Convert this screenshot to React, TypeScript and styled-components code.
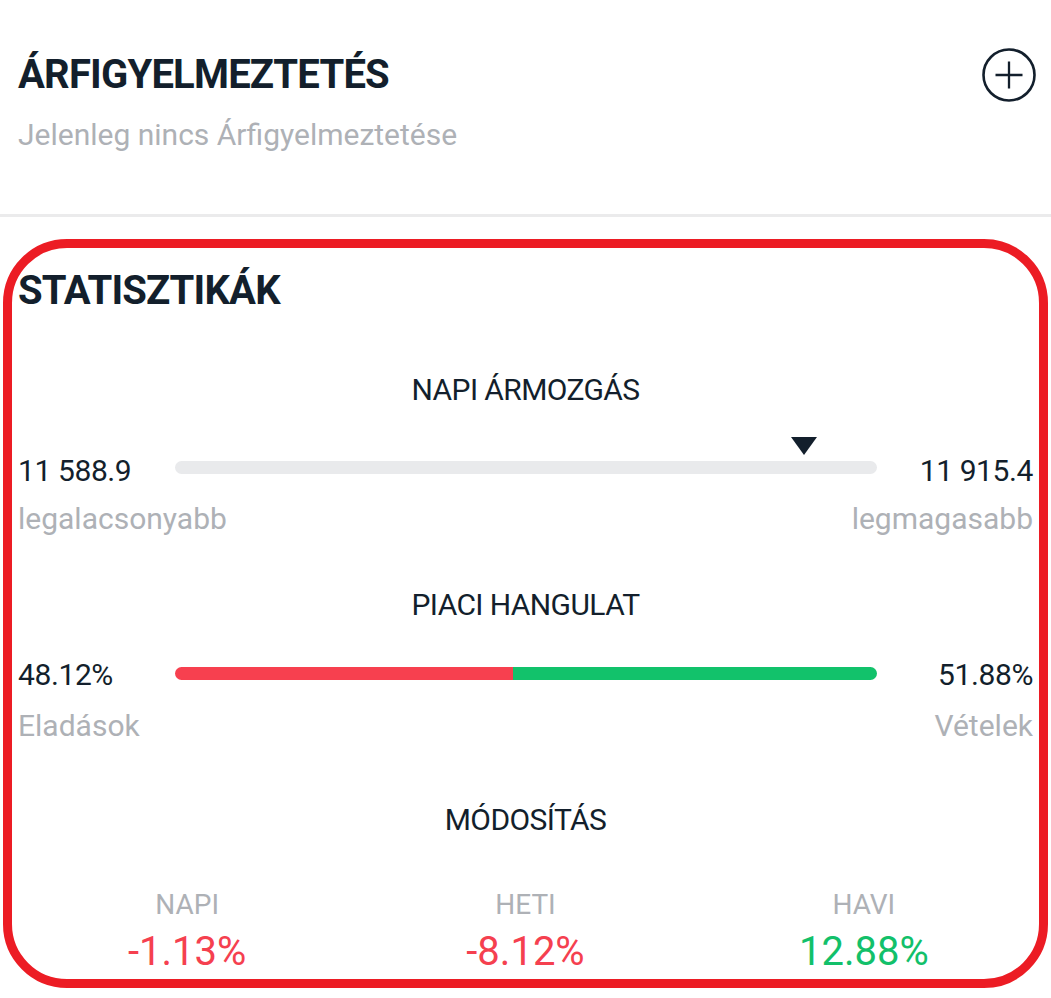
import React from "react";
import styled, { createGlobalStyle } from "styled-components";

const GlobalStyle = createGlobalStyle`
  html, body { margin: 0; padding: 0; background: #ffffff; }
  body { font-family: Roboto, "Liberation Sans", sans-serif; color: #131f2c; }
  * { box-sizing: border-box; }
`;

const Page = styled.div`
  width: 1051px;
  display: flex;
  flex-direction: column;
`;

const AlertHeader = styled.header`
  padding: 47px 18px 61px 18px;
  display: flex;
  flex-direction: column;
`;

const TitleRow = styled.div`
  display: flex;
  align-items: center;
  justify-content: space-between;
`;

const SectionTitle = styled.h2`
  margin: 0;
  font-family: Roboto, sans-serif;
  font-weight: 700;
  font-size: 40px;
  line-height: 48px;
  letter-spacing: -0.8px;
  color: #131f2c;
`;

const Muted = styled.p`
  margin: 14px 0 0 0;
  font-size: 30px;
  line-height: 36px;
  color: #aeb1b6;
`;

const AddButton = styled.button`
  border: none;
  background: none;
  padding: 0;
  width: 56px;
  height: 56px;
  display: flex;
  align-items: center;
  justify-content: center;
  cursor: pointer;
  margin-right: -4px;
`;

const Divider = styled.hr`
  margin: 0;
  border: none;
  height: 3px;
  background: #ebebec;
`;

const StatsCard = styled.section`
  margin: 22px 3px 0 3px;
  border: 9px solid #ec1c24;
  border-radius: 64px;
  padding: 19px 6px 3px 6px;
  display: flex;
  flex-direction: column;
`;

const BlockHeading = styled.div<{ $gap: number }>`
  margin-top: ${(p) => p.$gap}px;
  text-align: center;
  font-size: 30px;
  line-height: 36px;
  letter-spacing: -0.6px;
  color: #131f2c;
`;

const ValueRow = styled.div<{ $gap: number }>`
  margin-top: ${(p) => p.$gap}px;
  display: grid;
  grid-template-columns: 157px 1fr 156px;
  align-items: start;
`;

const Value = styled.div<{ $align?: "left" | "right" }>`
  font-size: 30px;
  line-height: 36px;
  letter-spacing: -0.4px;
  color: #131f2c;
  text-align: ${(p) => p.$align ?? "left"};
`;

const TrackWrap = styled.div<{ $offset: number }>`
  position: relative;
  margin-top: ${(p) => p.$offset}px;
  height: 13px;
`;

const Track = styled.div`
  height: 13px;
  border-radius: 7px;
  background: #e9eaec;
`;

const Marker = styled.div`
  position: absolute;
  bottom: 19px;
  width: 0;
  height: 0;
  border-left: 13px solid transparent;
  border-right: 13px solid transparent;
  border-top: 18px solid #131f2c;
  transform: translateX(-13px);
`;

const SplitBar = styled.div`
  display: flex;
  height: 13px;
  border-radius: 7px;
  overflow: hidden;
`;

const Segment = styled.div<{ $color: string }>`
  height: 100%;
  background: ${(p) => p.$color};
`;

const LabelRow = styled.div<{ $gap: number }>`
  margin-top: ${(p) => p.$gap}px;
  display: flex;
  justify-content: space-between;
  font-size: 30px;
  line-height: 36px;
  color: #aeb1b6;
`;

const ChangeGrid = styled.div`
  margin-top: 50px;
  display: grid;
  grid-template-columns: repeat(3, 1fr);
`;

const ChangeCell = styled.div`
  display: flex;
  flex-direction: column;
  align-items: center;
`;

const ChangeLabel = styled.div`
  font-size: 28px;
  line-height: 34px;
  color: #aeb1b6;
`;

const ChangeValue = styled.div<{ $positive: boolean }>`
  margin-top: 6px;
  font-size: 40px;
  line-height: 48px;
  color: ${(p) => (p.$positive ? "#12c06a" : "#f5404f")};
`;

const PlusIcon = () => (
  <svg width="56" height="56" viewBox="0 0 56 56" fill="none">
    <circle cx="28" cy="28" r="25.5" stroke="#131f2c" strokeWidth="2.6" />
    <path d="M28 14.5v27M14.5 28h27" stroke="#131f2c" strokeWidth="2.3" />
  </svg>
);

const changes = [
  { label: "NAPI", value: "-1.13%", positive: false },
  { label: "HETI", value: "-8.12%", positive: false },
  { label: "HAVI", value: "12.88%", positive: true },
];

export default function App() {
  const markerPct = 89.6;
  const sellPct = 48.12;
  return (
    <>
      <GlobalStyle />
      <Page>
        <AlertHeader>
          <TitleRow>
            <SectionTitle>ÁRFIGYELMEZTETÉS</SectionTitle>
            <AddButton aria-label="Hozzáadás">
              <PlusIcon />
            </AddButton>
          </TitleRow>
          <Muted>Jelenleg nincs Árfigyelmeztetése</Muted>
        </AlertHeader>
        <Divider />
        <StatsCard>
          <SectionTitle>STATISZTIKÁK</SectionTitle>

          <BlockHeading $gap={57}>NAPI ÁRMOZGÁS</BlockHeading>
          <ValueRow $gap={45}>
            <Value>11 588.9</Value>
            <TrackWrap $offset={8}>
              <Marker style={{ left: `${markerPct}%` }} />
              <Track />
            </TrackWrap>
            <Value $align="right">11 915.4</Value>
          </ValueRow>
          <LabelRow $gap={12}>
            <span>legalacsonyabb</span>
            <span>legmagasabb</span>
          </LabelRow>

          <BlockHeading $gap={50}>PIACI HANGULAT</BlockHeading>
          <ValueRow $gap={34}>
            <Value>48.12%</Value>
            <TrackWrap $offset={10}>
              <SplitBar>
                <Segment $color="#f7404f" style={{ width: `${sellPct}%` }} />
                <Segment $color="#12c26b" style={{ width: `${100 - sellPct}%` }} />
              </SplitBar>
            </TrackWrap>
            <Value $align="right">51.88%</Value>
          </ValueRow>
          <LabelRow $gap={15}>
            <span>Eladások</span>
            <span>Vételek</span>
          </LabelRow>

          <BlockHeading $gap={58}>MÓDOSÍTÁS</BlockHeading>
          <ChangeGrid>
            {changes.map((c) => (
              <ChangeCell key={c.label}>
                <ChangeLabel>{c.label}</ChangeLabel>
                <ChangeValue $positive={c.positive}>{c.value}</ChangeValue>
              </ChangeCell>
            ))}
          </ChangeGrid>
        </StatsCard>
      </Page>
    </>
  );
}
